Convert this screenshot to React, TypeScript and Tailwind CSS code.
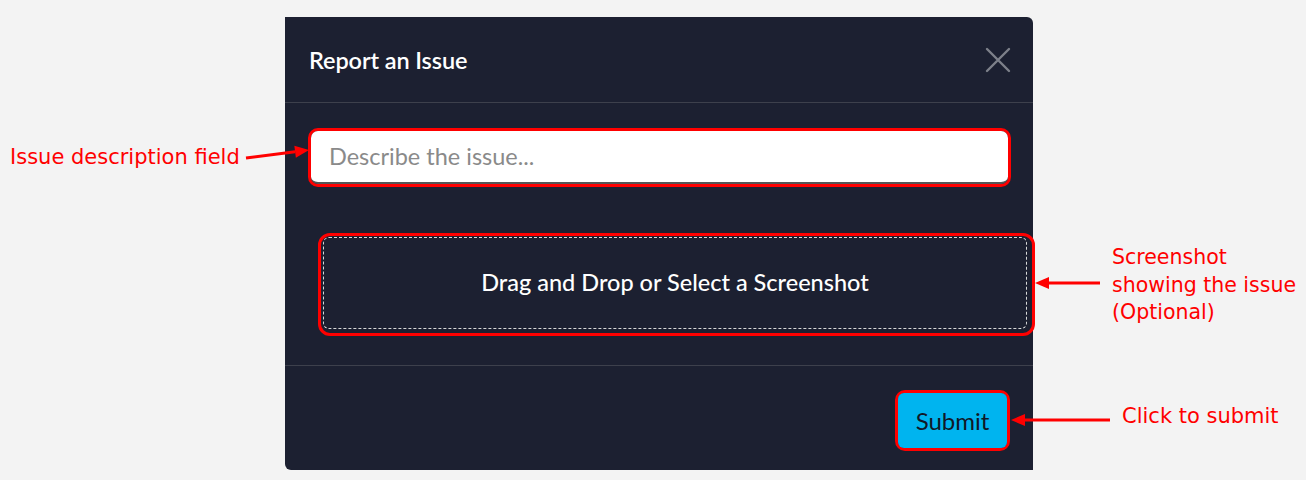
import React from "react";

const lato = { fontFamily: "Lato, 'Open Sans', sans-serif" };
const note = { fontFamily: "'DejaVu Sans', Verdana, sans-serif" };

function Arrow({ x1, y1, x2, y2 }: { x1: number; y1: number; x2: number; y2: number }) {
  const ang = Math.atan2(y2 - y1, x2 - x1);
  const len = 14;
  const w = 6;
  const bx = x2 - len * Math.cos(ang);
  const by = y2 - len * Math.sin(ang);
  const px = -Math.sin(ang) * w;
  const py = Math.cos(ang) * w;
  return (
    <g>
      <line x1={x1} y1={y1} x2={bx} y2={by} stroke="#ff0000" strokeWidth={3} />
      <polygon points={`${x2},${y2} ${bx + px},${by + py} ${bx - px},${by - py}`} fill="#ff0000" />
    </g>
  );
}

export default function App() {
  return (
    <div className="relative w-[1306px] h-[480px] overflow-hidden bg-[#f3f3f3]">
      <div className="pt-[17px] pl-[285px]">
        <div className="w-[748px] h-[453px] bg-[#1c2031] rounded-tr-[6px] rounded-bl-[6px]" style={lato}>
          {/* header */}
          <div className="h-[86px] flex items-center justify-between pl-[24px] pr-[22px] border-b border-[#3d404c]">
            <h2 className="pt-[3px] text-[23.5px] font-semibold text-white tracking-[-0.1px]">Report an Issue</h2>
            <svg width="26" height="26" viewBox="0 0 26 26">
              <path d="M2 2 L24 24 M24 2 L2 24" stroke="#7d808a" strokeWidth="2.4" strokeLinecap="round" />
            </svg>
          </div>

          {/* body */}
          <div className="pt-[25px] pl-[23px] pr-[23px] h-[263px] border-b border-[#3d404c]">
            <div className="w-[703px] h-[59px] rounded-[10px] border-[3px] border-[#ff0000]">
              <div className="h-full rounded-[7px] bg-white border-b-2 border-[#555] flex items-center pl-[18px] pt-[1px]">
                <span className="text-[23.5px] text-[#8a8a8a]">Describe the issue...</span>
              </div>
            </div>

            <div className="mt-[46px] ml-[10px] w-[717px] h-[103px] rounded-[12px] border-[3px] border-[#ff0000] pl-[2px] pr-[5px] pt-[1px] pb-[4px]">
              <div className="h-full rounded-[6px] border border-dashed border-[#d8d8d8] flex items-center justify-center">
                <span className="text-[23.5px] font-medium text-white">Drag and Drop or Select a Screenshot</span>
              </div>
            </div>
          </div>

          {/* footer */}
          <div className="flex justify-end pr-[23px] pt-[24px]">
            <div className="w-[115px] h-[61px] rounded-[10px] border-[3px] border-[#ff0000]">
              <div className="h-full rounded-[6px] bg-[#00b4ef] flex items-center justify-center">
                <span className="text-[24px] text-[#111827]">Submit</span>
              </div>
            </div>
          </div>
        </div>
      </div>

      {/* annotations */}
      <div className="absolute left-[10px] top-[147px] text-[21px] text-[#ff0000] leading-none" style={note}>
        Issue description field
      </div>
      <div className="absolute left-[1112px] top-[244px] text-[20.5px] text-[#ff0000] leading-[27.5px]" style={note}>
        Screenshot
        <br />
        showing the issue
        <br />
        (Optional)
      </div>
      <div className="absolute left-[1122px] top-[406px] text-[21px] text-[#ff0000] leading-none" style={note}>
        Click to submit
      </div>
      <svg className="absolute inset-0 pointer-events-none" width="1306" height="480">
        <Arrow x1={246} y1={158} x2={309} y2={150} />
        <Arrow x1={1100} y1={283} x2={1035} y2={283} />
        <Arrow x1={1110} y1={420} x2={1011} y2={420} />
      </svg>
    </div>
  );
}
